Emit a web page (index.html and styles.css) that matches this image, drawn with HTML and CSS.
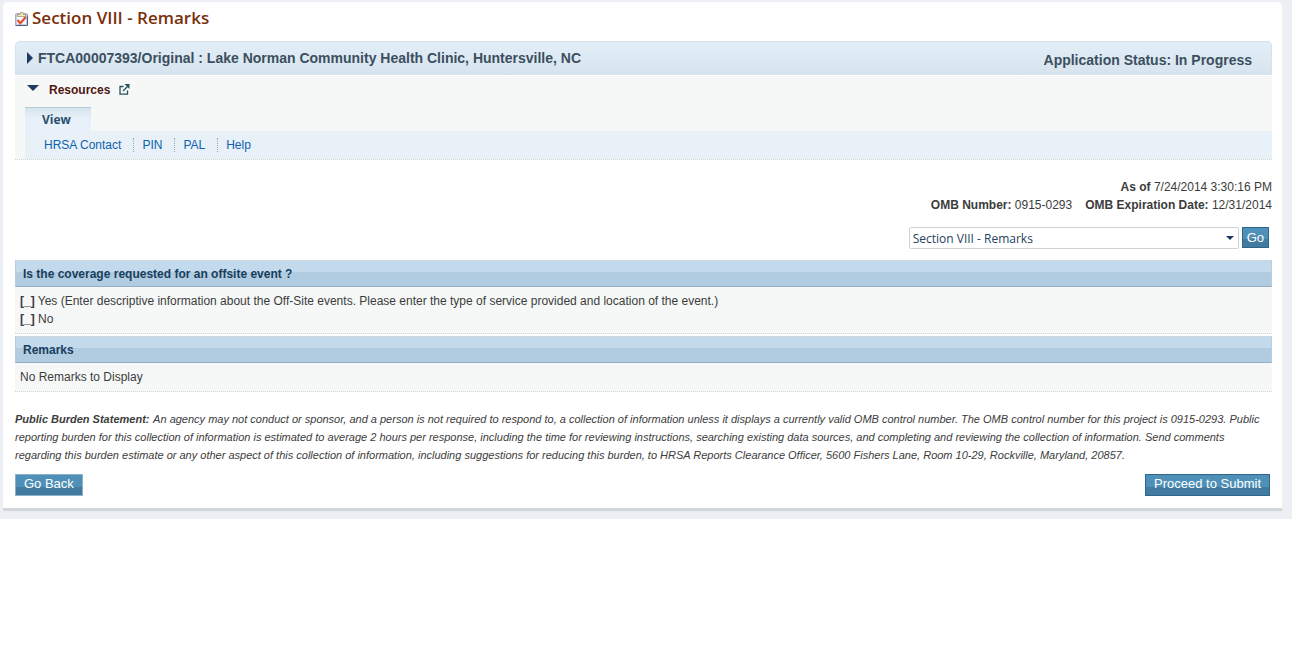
FILE: index.html
```
<!DOCTYPE html>
<html lang="en">
<head>
<meta charset="utf-8">
<title>Section VIII - Remarks</title>
<link rel="stylesheet" href="styles.css">
</head>
<body>
<div class="page">
<main class="panel">
  <h1 class="title">
    <svg class="title-icon" viewBox="0 0 13 14" aria-hidden="true">
      <rect x="0.500" y="1.500" width="12" height="12" rx="1" fill="#c3d0e4" stroke="#a3aec2"/>
      <path d="M0.500 13.500h12v-10" fill="none" stroke="#4b5f82"/>
      <path d="M2 4h9v8h-9z" fill="#f4f7fd"/>
      <path d="M2.500 4.500V2.500h2.500L5.500 0.500h2.500L8.500 2.500h2v2z" fill="#f0e6bd" stroke="#a39769" stroke-width="0.800"/>
      <path d="M2.500 8L5.300 11.300L10.800 5" fill="none" stroke="#e4502f" stroke-width="2.200"/>
    </svg>
    <span>Section VIII - Remarks</span>
  </h1>

  <header class="app-bar">
    <button class="app-name" type="button"><svg class="arrow-right" viewBox="0 0 6 12" aria-hidden="true"><path d="M0 0L6 6L0 12z" fill="#1f3a63"/></svg>FTCA00007393/Original : Lake Norman Community Health Clinic, Huntersville, NC</button>
    <span class="app-status">Application Status: In Progress</span>
  </header>

  <section class="resources">
    <div class="resources-head">
      <svg class="arrow-down" viewBox="0 0 12 6" aria-hidden="true"><path d="M0 0H12L6 6z" fill="#1f3a63"/></svg>
      <h2 class="resources-title">Resources</h2>
      <svg class="external" viewBox="0 0 11 11" aria-hidden="true"><path d="M4.500 2.500H1V10.200H8.500V6.500M4 7L8.500 2.500" fill="none" stroke="#24505f" stroke-width="1.300"/><path d="M5.500 0H10.500V5z" fill="#24505f"/></svg>
    </div>
    <div class="tab">View</div>
    <nav class="links">
      <a href="#contact">HRSA Contact</a>
      <a href="#pin">PIN</a>
      <a href="#pal">PAL</a>
      <a href="#help">Help</a>
    </nav>
  </section>

  <div class="meta">
    <div><b>As of</b> 7/24/2014 3:30:16 PM</div>
    <div class="meta-row"><span><b>OMB Number:</b> 0915-0293</span><span><b>OMB Expiration Date:</b> 12/31/2014</span></div>
  </div>

  <form class="jump">
    <div class="select-wrap">
      <select class="select" aria-label="Section"><option>Section VIII - Remarks</option></select>
      <svg class="select-arrow" viewBox="0 0 8 4" aria-hidden="true"><path d="M0 0H8L4 4z" fill="#1f3a63"/></svg>
    </div>
    <button class="button button-go" type="button">Go</button>
  </form>

  <section class="block">
    <h2 class="block-head">Is the coverage requested for an offsite event ?</h2>
    <div class="block-body">
      <div><b>[_]</b> Yes (Enter descriptive information about the Off-Site events. Please enter the type of service provided and location of the event.)</div>
      <div><b>[_]</b> No</div>
    </div>
  </section>
  <section class="block">
    <h2 class="block-head">Remarks</h2>
    <div class="block-body">No Remarks to Display</div>
  </section>

  <p class="statement"><b class="statement-label">Public Burden Statement:</b> An agency may not conduct or sponsor, and a person is not required to respond to, a collection of information unless it displays a currently valid OMB control number. The OMB control number for this project is 0915-0293. Public reporting burden for this collection of information is estimated to average 2 hours per response, including the time for reviewing instructions, searching existing data sources, and completing and reviewing the collection of information. Send comments regarding this burden estimate or any other aspect of this collection of information, including suggestions for reducing this burden, to HRSA Reports Clearance Officer, 5600 Fishers Lane, Room 10-29, Rockville, Maryland, 20857.</p>

  <div class="actions">
    <button class="button button-back" type="button">Go Back</button>
    <button class="button" type="button">Proceed to Submit</button>
  </div>
</main>
</div>
</body>
</html>
```
FILE: styles.css
```
* { box-sizing: border-box; }
body {
  margin: 0;
  background: #fff;
  color: #3c3c3c;
  font: 12px/18px "Liberation Sans", Arial, sans-serif;
}
h1, h2, p { margin: 0; }
.page { background: #ecf0f4; padding: 2px 10px 8px 3px; }
.panel {
  background: #fff;
  border-bottom: 3px solid #d3d6d8;
  border-radius: 5px 5px 0 0;
  padding: 4px 10px 12px 12px;
}
.title {
  display: flex;
  align-items: center;
  gap: 4px;
  height: 24px;
  margin-bottom: 11px;
  color: #7a2f0c;
  font: 600 17px/24px "Open Sans", "Noto Sans", sans-serif;
}
.title-icon { width: 13px; height: 14px; margin-top: 2px; }

.app-bar {
  display: flex;
  justify-content: space-between;
  height: 34px;
  padding: 0 19px 0 11px;
  border: 1px solid #d3e2ec;
  border-bottom: 0;
  border-radius: 5px 5px 0 0;
  background: linear-gradient(#e3eff8, #d7e3ed);
  color: #3b4f60;
  font-size: 14px;
  font-weight: bold;
}
.app-name {
  display: flex;
  align-items: center;
  gap: 5px;
  padding: 0 0 2px;
  border: 0;
  background: none;
  color: inherit;
  font: inherit;
}
.arrow-right { width: 6px; height: 12px; }
.app-status { padding-top: 9px; }

.resources {
  margin-top: 1px;
  padding-left: 10px;
  background: #f6f8f7;
  border-bottom: 1px dotted #d3d6d6;
}
.resources-head { display: flex; align-items: center; height: 27px; padding-left: 2px; }
.arrow-down { width: 12px; height: 6px; margin-bottom: 4px; }
.resources-title { margin: 0 9px 0 10px; color: #4f1611; font-size: 12px; }
.external { width: 11px; height: 11px; }
.tab {
  width: 66px;
  height: 24px;
  margin-top: 4px;
  padding-left: 17px;
  border-top: 1px solid #b0cadb;
  background: linear-gradient(#d7e5ef, #e8f1f9 50%);
  color: #27506f;
  font: 700 12px/24px "Open Sans", "Noto Sans", sans-serif;
}
.links { display: flex; height: 28px; padding: 7px 0 7px 11px; background: #e8f0f8; }
.links a {
  padding: 0 12px 0 8px;
  color: #0f62ae;
  line-height: 14px;
  text-decoration: none;
}
.links a + a { border-left: 1px dotted #9aa5b0; }

.meta { margin-top: 18px; text-align: right; }
.meta-row { display: flex; justify-content: flex-end; gap: 13px; }
.jump {
  display: flex;
  justify-content: flex-end;
  gap: 3px;
  margin: 13px 3px 11px 0;
}
.select-wrap { position: relative; width: 330px; }
.select {
  appearance: none;
  width: 100%;
  height: 22px;
  padding: 0 20px 0 3px;
  border: 1px solid #ccd3d9;
  border-radius: 2px;
  background: #fff;
  color: #263f60;
  font: 12px "Open Sans", "Noto Sans", sans-serif;
}
.select-arrow { position: absolute; right: 5px; top: 9px; width: 8px; height: 4px; }
.button {
  height: 22px;
  padding: 0 8px 2px;
  border: 1px solid #2f668b;
  background: linear-gradient(#4f90b8 0 60%, #437a9f 60%);
  color: #fff;
  font: 13px/18px "Liberation Sans", Arial, sans-serif;
}
.button-go { height: 21px; padding: 0 4px; }
.button-back { border-color: #8db0c4; }

.block + .block { margin-top: 2px; }
.block-head {
  height: 27px;
  padding: 1px 0 0 7px;
  border: 1px solid #b9cddb;
  border-top-color: #ccd6dc;
  border-bottom-color: #91aec4;
  background: linear-gradient(#c3daed 0 11px, #b1cce0 11px);
  color: #183e5d;
  font-size: 12px;
  line-height: 24px;
}
.block-body {
  padding: 5px;
  background: #f6f8f7;
  border-bottom: 1px dotted #cfd3d3;
}

.statement { margin-top: 18px; font-size: 11px; font-style: italic; }
.statement-label { margin-right: 1px; }
.actions { display: flex; justify-content: space-between; margin: 10px 2px 0 0; }
```
